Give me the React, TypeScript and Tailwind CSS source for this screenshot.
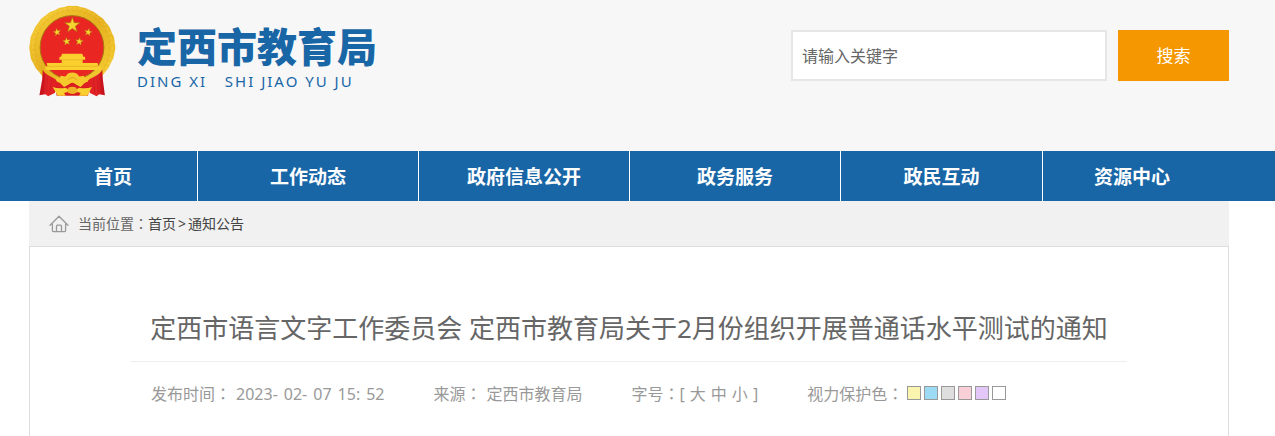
import type { ReactNode } from "react";

const navItems = ["首页", "工作动态", "政府信息公开", "政务服务", "政民互动", "资源中心"];

const publishedAt = ["2023-", "02-", "07", "15:", "52"];

const swatches = [
  { name: "黄色", color: "bg-[#faf5ae]" },
  { name: "蓝色", color: "bg-[#9ddaf4]" },
  { name: "灰色", color: "bg-[#dedede]" },
  { name: "粉色", color: "bg-[#f9cfd7]" },
  { name: "紫色", color: "bg-[#e3c7f8]" },
  { name: "白色", color: "bg-white" },
];

// Full-width colon centred in its square
function Colon() {
  return (
    <span lang="zh-TW" className="font-['Noto_Sans_CJK_TC',sans-serif]">
      ：
    </span>
  );
}

function Container({ children }: { children: ReactNode }) {
  return (
    <div className="pr-[17px]">
      <div className="mx-auto max-w-[1200px]">{children}</div>
    </div>
  );
}

const STAR = "M0-10 2.4-3.2 9.5-3.1 3.8 1.2 5.9 8.1 0 4-5.9 8.1-3.8 1.2-9.5-3.1-2.4-3.2Z";

function Emblem() {
  return (
    <svg viewBox="27 15 261 277" className="h-[92px] w-[87px] shrink-0" aria-hidden="true">
      <defs>
        <linearGradient id="gold" x1="0" y1="0" x2="1" y2="1">
          <stop offset="0" stopColor="#f6d03a" />
          <stop offset=".5" stopColor="#e6b11f" />
          <stop offset="1" stopColor="#f5ce34" />
        </linearGradient>
        <linearGradient id="drape" x1="0" x2="1">
          <stop offset="0" stopColor="#c10d17" />
          <stop offset=".12" stopColor="#e32427" />
          <stop offset=".5" stopColor="#d81c1f" />
          <stop offset=".88" stopColor="#e32427" />
          <stop offset="1" stopColor="#c10d17" />
        </linearGradient>
      </defs>
      <path
        d="M134 21Q145 15 157 18Q169 15 181 21Q197 22 209 30Q225 35 235 46Q251 55 259 69Q272 81 275 97Q285 111 284 127Q289 143 284 159Q283 176 273 190Q268 206 256 217L235 244H78L57 217Q45 207 40 191Q30 177 30 160Q25 144 30 128Q29 111 38 97Q43 81 54 69Q62 55 77 46Q89 34 104 31Q118 21 134 21Z"
        fill="url(#gold)"
      />
      <circle cx="157" cy="144" r="112" fill="none" stroke="#c98b10" strokeWidth="3" strokeDasharray="9 8" opacity=".25" />
      <circle cx="157" cy="144" r="120" fill="none" stroke="#fff09a" strokeWidth="3" strokeDasharray="5 10" opacity=".35" />
      <circle cx="156" cy="143" r="96" fill="#e92622" stroke="#a87512" strokeWidth="3" />
      <g fill="#f5d52f" stroke="#b06d10" strokeWidth=".8">
        <path d={STAR} transform="translate(157 76) scale(2.4)" />
        <path d={STAR} transform="translate(111 97) rotate(-12) scale(1.25)" />
        <path d={STAR} transform="translate(205 97) rotate(12) scale(1.25)" />
        <path d={STAR} transform="translate(140 125) rotate(-8) scale(1.25)" />
        <path d={STAR} transform="translate(178 125) rotate(8) scale(1.25)" />
      </g>
      <path d="M126 162H187L190 171H195L196 180H188V190H233L235 200H243V211H76V200H82L80 190H125V180H117L119 171H123Z" fill="#fad02e" />
      <path d="M120 180H193M82 200H235" stroke="#c98a13" strokeWidth="1.5" opacity=".6" />
      <path
        d="M68 210Q74 222 92 230Q104 236 116 246L198 246Q210 236 224 230Q241 222 247 210L249 240 255 287L238 284L230 290L210 280 206 270H108L104 280 84 290 76 284L58 287 66 240Z"
        fill="url(#drape)"
      />
      <path d="M72 224L68 280M82 230L80 279M94 236L88 283M242 224L247 280M232 230L235 279M220 236L226 283" stroke="#8e0710" strokeWidth="1.5" opacity=".4" />
      <path d="M104 262H210L204 288H110Z" fill="#d81c1f" />
      <path
        d="M106 234L119 237L122 228L136 230L143 222Q157 215 171 222L178 230L192 228L195 237L207 234L204 245L194 250L182 262L168 254Q157 244 146 254L132 262L120 250L110 245Z"
        fill="#f5c82b"
      />
      <path d="M143 241Q157 226 171 241" fill="none" stroke="#c7820f" strokeWidth="2" opacity=".7" />
      <path d="M98 262Q116 268 137 264L147 271 142 277 132 280L137 288H113Z" fill="#f8cf2e" />
      <path d="M216 262Q198 268 177 264L167 271 172 277 182 280L177 288H202Z" fill="#f8cf2e" />
      <path d="M145 264Q157 258 169 264L172 278Q157 288 142 278Z" fill="#eeb326" />
    </svg>
  );
}

function HomeIcon() {
  return (
    <svg viewBox="0 0 20 18" className="h-[18px] w-5" fill="none" stroke="#999" strokeWidth="1.3" strokeLinecap="round" strokeLinejoin="round" aria-hidden="true">
      <path d="M1 10.300 10 1.200l9 9.100M3.400 9.200V15.600q0 1 1 1H15.600q1 0 1-1V9.200" />
      <path d="M7.500 16.400V11.200q0-1 1-1h3q1 0 1 1v5.200" />
    </svg>
  );
}

export default function App() {
  return (
    <div className="min-h-screen bg-white font-['Noto_Sans','Noto_Sans_CJK_SC',sans-serif] text-[#666]" lang="zh-CN">
      <header className="bg-[#f7f7f7]">
        <Container>
          <div className="flex h-[151px] items-start justify-between">
            <a href="#" className="flex items-start gap-[21px] pt-[5px] text-[#1966a7]">
              <Emblem />
              <span className="flex flex-col pt-4">
                <span className="text-[40px] leading-[52px] font-black">定西市教育局</span>
                <span className="text-[15px] leading-4 tracking-[2px] whitespace-pre">{"DING XI   SHI JIAO YU JU"}</span>
              </span>
            </a>
            <form className="flex gap-[11px] pt-[30px]" onSubmit={(e) => e.preventDefault()}>
              <input
                type="text"
                aria-label="请输入关键字"
                placeholder="请输入关键字"
                className="h-[51px] w-[316px] border-2 border-[#e6e6e6] bg-white px-[9px] text-base outline-none placeholder:text-[#666]"
              />
              <button type="submit" className="h-[51px] w-[111px] bg-[#f59700] text-[17px] text-white">
                搜索
              </button>
            </form>
          </div>
        </Container>
      </header>

      <nav className="bg-[#1966a7]">
        <Container>
          <ul className="grid grid-cols-[169fr_221fr_211fr_211fr_202fr_178fr_8fr]">
            {navItems.map((item) => (
              <li key={item} className="border-r border-white nth-[6]:border-r-0">
                <a href="#" className="block pt-0.5 text-center text-[19px] leading-[48px] font-bold text-white">
                  {item}
                </a>
              </li>
            ))}
          </ul>
        </Container>
      </nav>

      <Container>
        <div className="flex h-[45px] items-center bg-[#f1f1f1] pl-5 text-sm">
          <HomeIcon />
          <span className="ml-[9px]">
            当前位置
            <Colon />
          </span>
          <a href="#" className="text-[#444]">首页</a>
          <span className="mx-0.5 text-[#444]">&gt;</span>
          <a href="#" className="text-[#444]">通知公告</a>
        </div>
        <main className="min-h-[190px] border border-b-0 border-[#ddd] px-[101px] pt-[61px]">
          <h1 className="border-b border-[#eee] pb-3 text-center text-[26px] leading-[41px]">
            定西市语言文字工作委员会 定西市教育局关于2月份组织开展普通话水平测试的通知
          </h1>
          <div className="flex items-baseline gap-[49px] pt-[19px] pl-5 text-base text-[#999]">
            <span className="flex items-baseline gap-[5px]">
              <span>
                发布时间
                <Colon />
              </span>
              <time dateTime="2023-02-07T15:52" className="flex gap-1.5">
                {publishedAt.map((part) => (
                  <span key={part}>{part}</span>
                ))}
              </time>
            </span>
            <span className="flex items-baseline gap-[5px]">
              <span>
                来源
                <Colon />
              </span>
              <span>定西市教育局</span>
            </span>
            <span className="flex items-baseline">
              字号
              <Colon />
              <span className="flex gap-[5px]">
                <span>[</span>
                <button type="button">大</button>
                <button type="button">中</button>
                <button type="button">小</button>
                <span>]</span>
              </span>
            </span>
            <span className="flex items-baseline">
              视力保护色
              <Colon />
              <span className="ml-1 flex gap-[3px]">
                {swatches.map((s) => (
                  <button key={s.name} type="button" aria-label={s.name} className={`size-[14px] border border-[#999] ${s.color}`} />
                ))}
              </span>
            </span>
          </div>
        </main>
      </Container>
    </div>
  );
}
